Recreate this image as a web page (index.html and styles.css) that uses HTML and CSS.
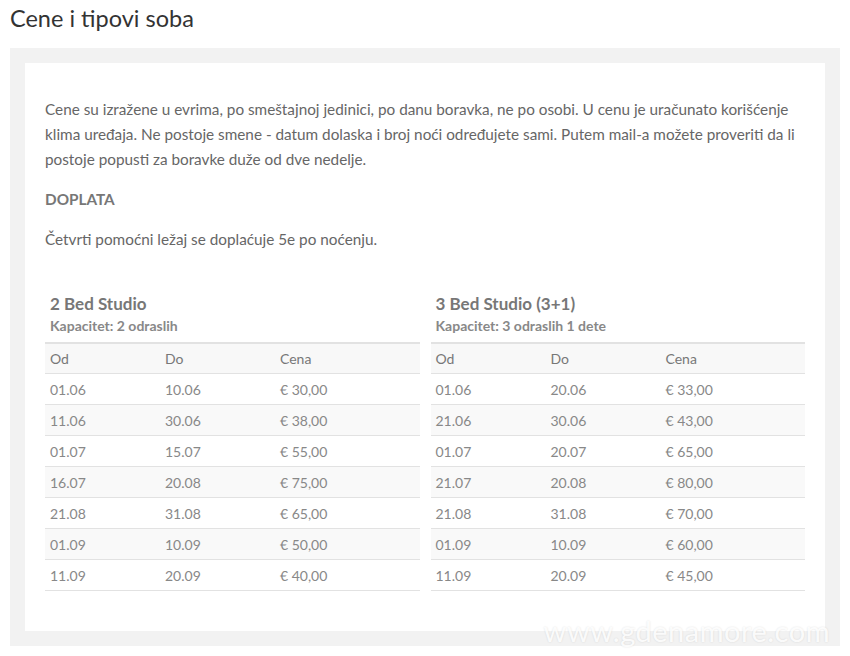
FILE: index.html
```html
<!DOCTYPE html>
<html lang="sr">
<head>
    <meta charset="UTF-8">
    <meta name="viewport" content="width=device-width, initial-scale=1.0">
    <title>Cene i tipovi soba</title>
    <link rel="stylesheet" href="styles.css">
</head>
<body>
    <h1>Cene i tipovi soba</h1>

    <div class="frame">
        <div class="content">
            <p>Cene su izražene u evrima, po smeštajnoj jedinici, po danu boravka, ne po osobi. U cenu je uračunato korišćenje klima uređaja. Ne postoje smene - datum dolaska i broj noći određujete sami. Putem mail-a možete proveriti da li postoje popusti za boravke duže od dve nedelje.</p>
            <p class="label">DOPLATA</p>
            <p>Četvrti pomoćni ležaj se doplaćuje 5e po noćenju.</p>

            <div class="rooms">
                <!-- 2 bed -->
                <div class="room">
                    <h3>2 Bed Studio</h3>
                    <h4>Kapacitet: 2 odraslih</h4>
                    <table>
                        <thead>
                            <tr><th>Od</th><th>Do</th><th>Cena</th></tr>
                        </thead>
                        <tbody>
                            <tr><td>01.06</td><td>10.06</td><td>€ 30,00</td></tr>
                            <tr><td>11.06</td><td>30.06</td><td>€ 38,00</td></tr>
                            <tr><td>01.07</td><td>15.07</td><td>€ 55,00</td></tr>
                            <tr><td>16.07</td><td>20.08</td><td>€ 75,00</td></tr>
                            <tr><td>21.08</td><td>31.08</td><td>€ 65,00</td></tr>
                            <tr><td>01.09</td><td>10.09</td><td>€ 50,00</td></tr>
                            <tr><td>11.09</td><td>20.09</td><td>€ 40,00</td></tr>
                        </tbody>
                    </table>
                </div>

                <!-- 3 bed -->
                <div class="room">
                    <h3>3 Bed Studio (3+1)</h3>
                    <h4>Kapacitet: 3 odraslih 1 dete</h4>
                    <table>
                        <thead>
                            <tr><th>Od</th><th>Do</th><th>Cena</th></tr>
                        </thead>
                        <tbody>
                            <tr><td>01.06</td><td>20.06</td><td>€ 33,00</td></tr>
                            <tr><td>21.06</td><td>30.06</td><td>€ 43,00</td></tr>
                            <tr><td>01.07</td><td>20.07</td><td>€ 65,00</td></tr>
                            <tr><td>21.07</td><td>20.08</td><td>€ 80,00</td></tr>
                            <tr><td>21.08</td><td>31.08</td><td>€ 70,00</td></tr>
                            <tr><td>01.09</td><td>10.09</td><td>€ 60,00</td></tr>
                            <tr><td>11.09</td><td>20.09</td><td>€ 45,00</td></tr>
                        </tbody>
                    </table>
                </div>
            </div>
        </div>
    </div>

    <div class="watermark">www.gdenamore.com</div>
</body>
</html>
```

FILE: styles.css
```css
body {
    font-family: Lato, "Open Sans", sans-serif;
    margin: 0;
    padding: 0 10px;
    background: white;
    color: #666;
    position: relative;
    min-height: 656px;
}

h1 {
    margin: 0 0 12px;
    font-size: 23.5px;
    font-weight: normal;
    line-height: 36px;
    color: #333;
}

.frame {
    background: #f2f2f2;
    padding: 15px;
}

.content {
    background: white;
    padding: 34px 20px 40px;
}

p {
    margin: 0 0 15px;
    font-size: 15.3px;
    line-height: 25px;
    color: #666;
}

p.label {
    font-weight: bold;
    color: #777;
}

.rooms {
    display: grid;
    grid-template-columns: 1fr 1fr;
    gap: 11px;
    margin-top: 40px;
}

h3 {
    margin: 0;
    padding: 0 5px;
    font-size: 17px;
    line-height: 24px;
    color: #777;
}

h4 {
    margin: 0 0 6px;
    padding: 0 5px;
    font-size: 14px;
    line-height: 20px;
    color: #888;
}

table {
    width: 100%;
    border-collapse: collapse;
    font-size: 14px;
    color: #888;
}

th, td {
    text-align: left;
    padding: 0 5px;
    height: 30px;
    border-bottom: 1px solid #e2e2e2;
}

th {
    font-weight: normal;
    color: #777;
    background: #f8f8f8;
    border-top: 2px solid #e2e2e2;
    height: 29px;
}

th:nth-child(1), th:nth-child(2) {
    width: 105px;
}

tbody tr:nth-child(even) td {
    background: #f9f9f9;
}

.watermark {
    position: absolute;
    right: 20px;
    top: 613px;
    font-size: 29px;
    color: rgba(255, 255, 255, 0.9);
    text-shadow: 0 0 2px rgba(0, 0, 0, 0.12);
    letter-spacing: 0.5px;
}
```
